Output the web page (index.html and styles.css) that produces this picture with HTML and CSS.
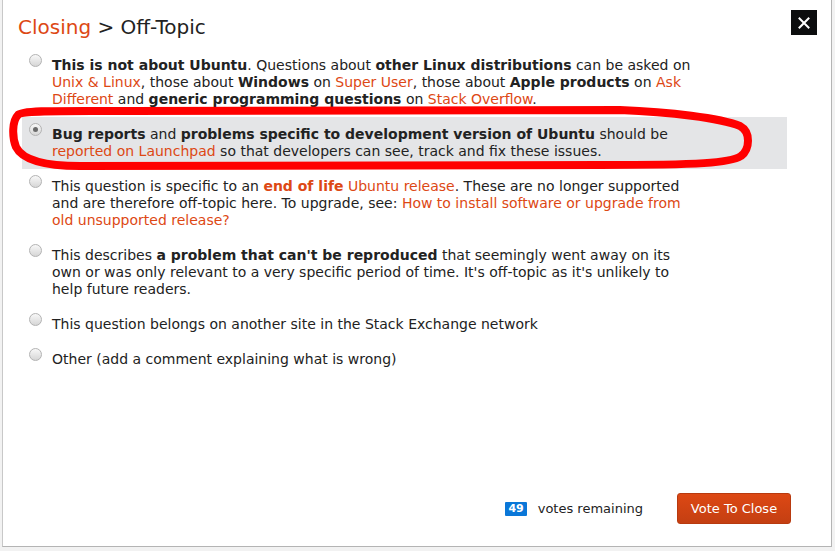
FILE: index.html
```html
<!DOCTYPE html>
<html>
<head>
<meta charset="utf-8">
<link rel="stylesheet" href="styles.css">
</head>
<body>
<div class="popup">
  <div class="popup-head">
    <h2 class="popup-title"><a class="crumb">Closing</a> &gt; Off-Topic</h2>
    <button class="close-btn" aria-label="close">
      <svg width="12" height="12" viewBox="0 0 12 12"><path d="M1.5 1.5 L10.5 10.5 M10.5 1.5 L1.5 10.5" stroke="#fff" stroke-width="2" stroke-linecap="square"/></svg>
    </button>
  </div>
  <ul class="options">
    <li class="option">
      <span class="radio"></span>
      <span class="opt-text"><b>This is not about Ubuntu</b>. Questions about <b>other Linux distributions</b> can be asked on <a>Unix &amp; Linux</a>, those about <b>Windows</b> on <a>Super User</a>, those about <b>Apple products</b> on <a>Ask Different</a> and <b>generic programming questions</b> on <a>Stack Overflow</a>.</span>
    </li>
    <li class="option selected">
      <span class="radio checked"></span>
      <span class="opt-text"><b>Bug reports</b> and <b>problems specific to development version of Ubuntu</b> should be <a>reported on Launchpad</a> so that developers can see, track and fix these issues.</span>
    </li>
    <li class="option">
      <span class="radio"></span>
      <span class="opt-text">This question is specific to an <a><b>end of life</b></a> <a>Ubuntu release</a>. These are no longer supported and are therefore off-topic here. To upgrade, see: <a>How to install software or upgrade from old unsupported release?</a></span>
    </li>
    <li class="option">
      <span class="radio"></span>
      <span class="opt-text">This describes <b>a problem that can't be reproduced</b> that seemingly went away on its own or was only relevant to a very specific period of time. It's off-topic as it's unlikely to help future readers.</span>
    </li>
    <li class="option">
      <span class="radio"></span>
      <span class="opt-text">This question belongs on another site in the Stack Exchange network</span>
    </li>
    <li class="option">
      <span class="radio"></span>
      <span class="opt-text">Other (add a comment explaining what is wrong)</span>
    </li>
  </ul>
  <div class="popup-foot">
    <span class="badge">49</span>
    <span class="votes">votes remaining</span>
    <button class="vote-btn">Vote To Close</button>
  </div>
</div>
<svg class="scribble" width="835" height="551" viewBox="0 0 835 551">
  <path d="M18,115 C22,110 60,111 130,111 L620,110 C670,112 720,118 740,126 C751,132 750,149 741,156 C730,163 700,165 600,165 L80,166 C42,166 22,159 16,147 C12,137 12,121 18,115 Z" fill="none" stroke="#ff0000" stroke-width="8" stroke-linejoin="round"/>
</svg>
</body>
</html>
```
FILE: styles.css
```css
html, body {
  margin: 0;
  padding: 0;
}
body {
  position: relative;
  width: 835px;
  height: 551px;
  background: #f2f2f2;
  overflow: hidden;
  font-family: "DejaVu Sans", Verdana, sans-serif;
  color: #222;
}
.popup {
  margin-left: 2px;
  width: 830px;
  height: 547px;
  background: #fff;
  border-left: 1px solid #c8c8c8;
  border-right: 1px solid #b4b4b4;
  border-bottom: 1px solid #b4b4b4;
  display: flex;
  flex-direction: column;
  box-sizing: border-box;
}
.popup-head {
  display: flex;
  justify-content: space-between;
  align-items: flex-start;
  padding: 10px 14px 0 15px;
}
.popup-title {
  margin: 5px 0 0 0;
  font-size: 20px;
  font-weight: normal;
  line-height: 24px;
  color: #222;
}
.crumb {
  color: #dd4814;
}
.close-btn {
  width: 26px;
  height: 25px;
  border: none;
  padding: 0;
  background: #0c0d0e;
  display: flex;
  align-items: center;
  justify-content: center;
}
.options {
  list-style: none;
  margin: 9px 0 0 0;
  padding: 0 0 0 19px;
}
.option {
  display: flex;
  align-items: flex-start;
  width: 765px;
  box-sizing: border-box;
  padding: 9px 7px 9px 7px;
}
.option.selected {
  background: #e4e5e7;
}
.radio {
  flex: none;
  width: 11px;
  height: 11px;
  margin-top: -3px;
  border-radius: 50%;
  border: 1px solid #b3b3b3;
  background: linear-gradient(#f8f8f8, #d6d6d6);
  display: flex;
  align-items: center;
  justify-content: center;
}
.radio.checked::after {
  content: "";
  width: 5px;
  height: 5px;
  border-radius: 50%;
  background: #6a6a6a;
}
.opt-text {
  margin-left: 10px;
  width: 645px;
  font-size: 14px;
  line-height: 17px;
}
.opt-text a {
  color: #dd4814;
}
.opt-text b {
  font-weight: bold;
}
.popup-foot {
  margin-top: auto;
  display: flex;
  justify-content: flex-end;
  align-items: center;
  padding: 0 40px 22px 0;
}
.badge {
  background: #0a77d8;
  color: #fff;
  font-size: 11px;
  font-weight: bold;
  line-height: 14px;
  padding: 0 3px;
  min-width: 14px;
  text-align: center;
  border-radius: 1px;
}
.votes {
  margin-left: 11px;
  font-size: 13px;
  color: #222;
}
.vote-btn {
  margin-left: 34px;
  width: 114px;
  height: 31px;
  border: 1px solid #b83a0f;
  border-radius: 3px;
  background: linear-gradient(#dd4814, #c43f12);
  color: #fff;
  font-family: "DejaVu Sans", Verdana, sans-serif;
  font-size: 13px;
  padding: 0;
}
.scribble {
  position: absolute;
  left: 0;
  top: 0;
  pointer-events: none;
}
```
